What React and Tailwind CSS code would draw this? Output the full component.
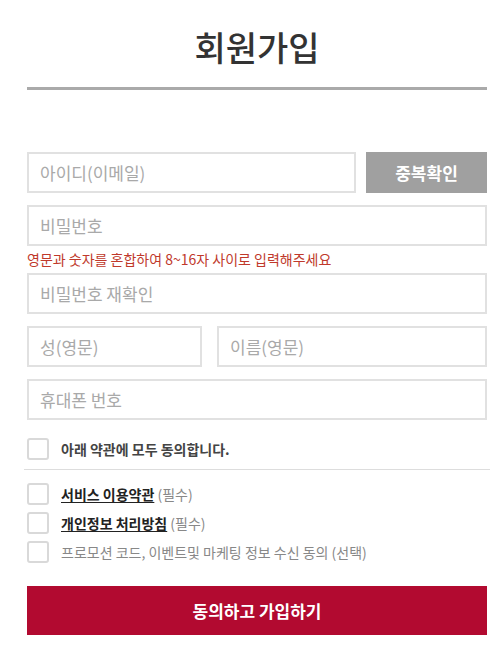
import React from 'react';

const font = { fontFamily: '"Noto Sans CJK KR", "Noto Sans", sans-serif' };

function Field({ placeholder, className = '' }) {
  return (
    <input
      type="text"
      placeholder={placeholder}
      className={`h-[41px] border-2 border-[#e1e1e1] px-[11px] text-[17px] text-[#333] placeholder:text-[#a9a9a9] outline-none ${className}`}
    />
  );
}

function Box() {
  return <span className="w-[22px] h-[22px] shrink-0 border-2 border-[#d9d9d9] rounded-[3px] bg-white" />;
}

export default function App() {
  return (
    <div className="w-[499px] h-[653px] bg-white pl-[27px] pr-[12px]" style={font}>
      <h1 className="pt-[24px] text-center text-[34px] leading-[46px] font-medium text-[#333]">회원가입</h1>
      <div className="mt-[17px] h-[3px] bg-[#aaaaaa]" />

      <form className="mt-[62px] flex flex-col">
        <div className="flex gap-[10px]">
          <Field placeholder="아이디(이메일)" className="flex-1 min-w-0" />
          <button type="button" className="w-[121px] h-[41px] bg-[#a0a0a0] text-white text-[17px] font-bold">중복확인</button>
        </div>

        <Field placeholder="비밀번호" className="mt-[12px] w-full" />
        <p className="mt-[4px] text-[14px] leading-[18px] text-[#c0392b]">영문과 숫자를 혼합하여 8~16자 사이로 입력해주세요</p>

        <Field placeholder="비밀번호 재확인" className="mt-[5px] w-full" />

        <div className="mt-[12px] flex gap-[15px]">
          <Field placeholder="성(영문)" className="w-[175px]" />
          <Field placeholder="이름(영문)" className="flex-1 min-w-0" />
        </div>

        <Field placeholder="휴대폰 번호" className="mt-[12px] w-full" />

        <label className="mt-[18px] flex items-center gap-[12px] h-[22px]">
          <Box />
          <span className="text-[14px] font-semibold text-[#444]">아래 약관에 모두 동의합니다.</span>
        </label>
        <div className="mt-[9px] -mx-[3px] h-px bg-[#dddddd]" />

        <div className="mt-[13px] flex flex-col gap-[7px]">
          <label className="flex items-center gap-[12px] h-[22px] text-[14px]">
            <Box />
            <span>
              <span className="font-bold text-[#222] underline underline-offset-2">서비스 이용약관</span>
              <span className="text-[#888]"> (필수)</span>
            </span>
          </label>
          <label className="flex items-center gap-[12px] h-[22px] text-[14px]">
            <Box />
            <span>
              <span className="font-bold text-[#222] underline underline-offset-2">개인정보 처리방침</span>
              <span className="text-[#888]"> (필수)</span>
            </span>
          </label>
          <label className="flex items-center gap-[12px] h-[22px] text-[14px] text-[#888]">
            <Box />
            <span>프로모션 코드, 이벤트및 마케팅 정보 수신 동의 (선택)</span>
          </label>
        </div>

        <button type="button" className="mt-[23px] h-[49px] w-full bg-[#b20a30] text-white text-[17px] font-semibold">
          동의하고 가입하기
        </button>
      </form>
    </div>
  );
}
